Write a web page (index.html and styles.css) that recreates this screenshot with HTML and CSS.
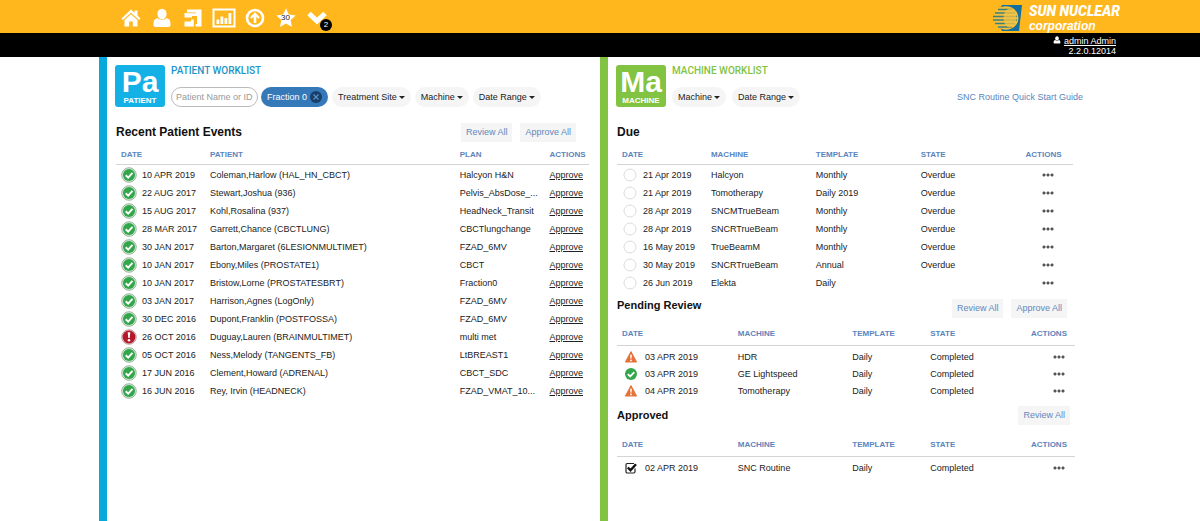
FILE: index.html
```html
<!DOCTYPE html>
<html lang="en">
<head>
<meta charset="utf-8">
<meta name="viewport" content="width=device-width, initial-scale=1">
<title>Worklists</title>
<link rel="stylesheet" href="styles.css">
</head>
<body>
<svg class="sprite" aria-hidden="true">
  <symbol id="pass" viewBox="0 0 16 16"><circle cx="8" cy="8" r="7.3" fill="#d5e6d7" stroke="#86a98a" stroke-width=".8"/><circle cx="8" cy="8" r="6" fill="#32a64a"/><path d="M4.700 8.200l2.500 2.400 4.300-4.700" fill="none" stroke="#fff" stroke-width="2"/></symbol>
  <symbol id="fail" viewBox="0 0 16 16"><circle cx="8" cy="8" r="7.300" fill="#e6d0d2" stroke="#b58a8e" stroke-width=".8"/><circle cx="8" cy="8" r="6.400" fill="#b3192b"/><path d="M6.700 3.200h2.600l-.6 5.800H7.300z" fill="#fff"/><circle cx="8" cy="11.300" r="1.300" fill="#fff"/></symbol>
  <symbol id="empty" viewBox="0 0 16 16"><circle cx="8" cy="8" r="6" fill="#fff" stroke="#dcdcdc"/></symbol>
  <symbol id="warn" viewBox="0 0 16 16"><path d="M8 2.600L13.600 13H2.400z" fill="#e5723a" stroke="#e5723a" stroke-linejoin="round"/><path d="M7.100 5.800h1.800l-.4 4h-1z" fill="#fff"/><circle cx="8" cy="11.400" r=".9" fill="#fff"/></symbol>
  <symbol id="ok" viewBox="0 0 16 16"><circle cx="8" cy="8" r="6" fill="#32a64a"/><path d="M4.800 8.100l2.400 2.300 4.100-4.300" fill="none" stroke="#fff" stroke-width="1.800"/></symbol>
  <symbol id="ticked" viewBox="0 0 16 16"><path d="M12 8.600v3.200a1.200 1.200 0 0 1-1.200 1.200H4.200A1.200 1.200 0 0 1 3 11.800V4.700a1.200 1.200 0 0 1 1.200-1.200h6.800" fill="none" stroke="#222" stroke-width="1.200"/><path d="M4.800 7.500l2.700 2.700 5.500-6" fill="none" stroke="#111" stroke-width="2.400"/></symbol>
  <symbol id="person" viewBox="0 0 20 20"><ellipse cx="10" cy="6" rx="4.600" ry="5.200"/><path d="M5.500 10C3 10.500 1.500 12.500 1.500 15.500V17q0 2 2 2h13q2 0 2-2v-1.500c0-3-1.500-5-4-5.500C13 12.300 7 12.300 5.500 10z"/></symbol>
</svg>

<header>
  <div class="topbar">
    <nav class="wrap nav" aria-label="Main">
      <div class="nav-icons">
        <a href="#" aria-label="Home"><svg viewBox="0 0 20 20"><path d="M10 1.500l3.500 3.300V2.500h3v5l3 2.900-1.400 1.500L10 4.700l-8.100 7.200L.5 10.400z"/><path d="M10 6.300l6.500 5.700v6.500h-4.700v-5H8.200v5H3.500V12z"/></svg></a>
        <a href="#" aria-label="Patients"><svg viewBox="0 0 20 20"><use href="#person"/></svg></a>
        <a href="#" aria-label="Machines"><svg viewBox="0 0 20 20"><path d="M4 1.500h14.500v17h-6V16h1.500V8H9v1.500H1.500V5H4z"/><path d="M1.500 13.500H8V11.500h2.800v7H1.500z"/><path d="M4 4.800h9" stroke="#ffb71d" stroke-width=".8"/></svg></a>
        <a href="#" aria-label="Reports"><svg class="wide" viewBox="0 0 24 20"><path d="M1.500 1.500h21v17h-21z" fill="none" stroke="#fff" stroke-width="2"/><path d="M4.500 11.500h2.800V16H4.500zM8.500 8.500h2.800V16H8.500zM12.500 10h2.800v6h-2.800zM16.500 5h2.800v11h-2.800z"/></svg></a>
        <a href="#" aria-label="Upload"><svg viewBox="0 0 20 20"><circle cx="10" cy="10" r="8" fill="none" stroke="#fff" stroke-width="2.600"/><path d="M10 4.300l4.800 5-1.300 1.400-2.200-2V15H8.700V8.700l-2.200 2-1.300-1.400z"/></svg></a>
        <a href="#" aria-label="Favourites, 30"><svg viewBox="0 0 20 20"><path d="M10 .3l2.800 6.300 6.900.8-5.100 4.700 1.400 6.900-6-3.500-6 3.500 1.400-6.900L.3 7.400l6.900-.8z"/></svg><span class="count">30</span></a>
        <a href="#" aria-label="Tasks, 2"><svg viewBox="0 0 20 20"><path d="M2 5.500l8 7.500 8-7.500" fill="none" stroke="#fff" stroke-width="5"/></svg><span class="badge">2</span></a>
      </div>
      <div class="brand">
        <svg viewBox="0 0 29 26"><path d="M9 0h20l-3 26H9c-4-6-4-20 0-26z" fill="#126f9f"/><ellipse cx="13" cy="13" rx="12.500" ry="11.800" fill="#f4bf3c"/><path d="M5 4.500h14M2 8h20M0 11.500h24M0 15h24M2 18.500h20M5 22h14" stroke="#3e8077" stroke-width="1.300"/><ellipse cx="17" cy="13" rx="6.500" ry="9.500" fill="#f6c444" opacity=".75"/></svg>
        <div><div class="brand-name">SUN NUCLEAR</div><div class="brand-sub">corporation</div></div>
      </div>
    </nav>
  </div>
  <div class="userbar">
    <div class="wrap user">
      <div><svg viewBox="0 0 20 20"><use href="#person"/></svg> <a href="#">admin Admin</a></div>
      <div>2.2.0.12014</div>
    </div>
  </div>
</header>

<main class="wrap panels">
  <section class="panel patient">
    <div class="panel-head">
      <div class="tile"><b>Pa</b><span>PATIENT</span></div>
      <div class="head-body">
        <h1>PATIENT WORKLIST</h1>
        <div class="filters">
          <input type="text" placeholder="Patient Name or ID" aria-label="Patient Name or ID">
          <button class="pill active">Fraction 0 <svg viewBox="0 0 12 12"><circle cx="6" cy="6" r="6" fill="#173f6c"/><path d="M3.500 3.500l5 5M8.500 3.500l-5 5" stroke="#5d91c5" stroke-width="1.200"/></svg></button>
          <button class="pill">Treatment Site<i class="caret"></i></button>
          <button class="pill">Machine<i class="caret"></i></button>
          <button class="pill">Date Range<i class="caret"></i></button>
        </div>
      </div>
    </div>
    <div class="bar"><h2>Recent Patient Events</h2><div class="bulk"><button>Review All</button><button>Approve All</button></div></div>
    <table class="events">
      <colgroup><col class="c-date"><col class="c-name"><col class="c-plan"><col></colgroup>
      <thead><tr><th>DATE</th><th>PATIENT</th><th>PLAN</th><th>ACTIONS</th></tr></thead>
      <tbody>
        <tr><td><svg><use href="#pass"/></svg>10 APR 2019</td><td>Coleman,Harlow (HAL_HN_CBCT)</td><td>Halcyon H&amp;N</td><td><a href="#">Approve</a></td></tr>
        <tr><td><svg><use href="#pass"/></svg>22 AUG 2017</td><td>Stewart,Joshua (936)</td><td>Pelvis_AbsDose_...</td><td><a href="#">Approve</a></td></tr>
        <tr><td><svg><use href="#pass"/></svg>15 AUG 2017</td><td>Kohl,Rosalina (937)</td><td>HeadNeck_Transit</td><td><a href="#">Approve</a></td></tr>
        <tr><td><svg><use href="#pass"/></svg>28 MAR 2017</td><td>Garrett,Chance (CBCTLUNG)</td><td>CBCTlungchange</td><td><a href="#">Approve</a></td></tr>
        <tr><td><svg><use href="#pass"/></svg>30 JAN 2017</td><td>Barton,Margaret (6LESIONMULTIMET)</td><td>FZAD_6MV</td><td><a href="#">Approve</a></td></tr>
        <tr><td><svg><use href="#pass"/></svg>10 JAN 2017</td><td>Ebony,Miles (PROSTATE1)</td><td>CBCT</td><td><a href="#">Approve</a></td></tr>
        <tr><td><svg><use href="#pass"/></svg>10 JAN 2017</td><td>Bristow,Lorne (PROSTATESBRT)</td><td>Fraction0</td><td><a href="#">Approve</a></td></tr>
        <tr><td><svg><use href="#pass"/></svg>03 JAN 2017</td><td>Harrison,Agnes (LogOnly)</td><td>FZAD_6MV</td><td><a href="#">Approve</a></td></tr>
        <tr><td><svg><use href="#pass"/></svg>30 DEC 2016</td><td>Dupont,Franklin (POSTFOSSA)</td><td>FZAD_6MV</td><td><a href="#">Approve</a></td></tr>
        <tr><td><svg><use href="#fail"/></svg>26 OCT 2016</td><td>Duguay,Lauren (BRAINMULTIMET)</td><td>multi met</td><td><a href="#">Approve</a></td></tr>
        <tr><td><svg><use href="#pass"/></svg>05 OCT 2016</td><td>Ness,Melody (TANGENTS_FB)</td><td>LtBREAST1</td><td><a href="#">Approve</a></td></tr>
        <tr><td><svg><use href="#pass"/></svg>17 JUN 2016</td><td>Clement,Howard (ADRENAL)</td><td>CBCT_SDC</td><td><a href="#">Approve</a></td></tr>
        <tr><td><svg><use href="#pass"/></svg>16 JUN 2016</td><td>Rey, Irvin (HEADNECK)</td><td>FZAD_VMAT_10...</td><td><a href="#">Approve</a></td></tr>
      </tbody>
    </table>
  </section>

  <section class="panel machine">
    <div class="panel-head">
      <div class="tile"><b>Ma</b><span>MACHINE</span></div>
      <div class="head-body">
        <h1>MACHINE WORKLIST</h1>
        <div class="filters">
          <button class="pill">Machine<i class="caret"></i></button>
          <button class="pill">Date Range<i class="caret"></i></button>
          <a class="guide" href="#">SNC Routine Quick Start Guide</a>
        </div>
      </div>
    </div>
    <div class="bar"><h2>Due</h2></div>
    <table class="due">
      <colgroup><col class="d-date"><col class="d-mach"><col class="d-temp"><col class="d-state"><col></colgroup>
      <thead><tr><th>DATE</th><th>MACHINE</th><th>TEMPLATE</th><th>STATE</th><th>ACTIONS</th></tr></thead>
      <tbody>
        <tr><td><svg><use href="#empty"/></svg>21 Apr 2019</td><td>Halcyon</td><td>Monthly</td><td>Overdue</td><td><button class="more" aria-label="More actions"></button></td></tr>
        <tr><td><svg><use href="#empty"/></svg>21 Apr 2019</td><td>Tomotherapy</td><td>Daily 2019</td><td>Overdue</td><td><button class="more" aria-label="More actions"></button></td></tr>
        <tr><td><svg><use href="#empty"/></svg>28 Apr 2019</td><td>SNCMTrueBeam</td><td>Monthly</td><td>Overdue</td><td><button class="more" aria-label="More actions"></button></td></tr>
        <tr><td><svg><use href="#empty"/></svg>28 Apr 2019</td><td>SNCRTrueBeam</td><td>Monthly</td><td>Overdue</td><td><button class="more" aria-label="More actions"></button></td></tr>
        <tr><td><svg><use href="#empty"/></svg>16 May 2019</td><td>TrueBeamM</td><td>Monthly</td><td>Overdue</td><td><button class="more" aria-label="More actions"></button></td></tr>
        <tr><td><svg><use href="#empty"/></svg>30 May 2019</td><td>SNCRTrueBeam</td><td>Annual</td><td>Overdue</td><td><button class="more" aria-label="More actions"></button></td></tr>
        <tr><td><svg><use href="#empty"/></svg>26 Jun 2019</td><td>Elekta</td><td>Daily</td><td></td><td><button class="more" aria-label="More actions"></button></td></tr>
      </tbody>
    </table>
    <div class="bar pending"><h2>Pending Review</h2><div class="bulk"><button>Review All</button><button>Approve All</button></div></div>
    <table class="done">
      <colgroup><col class="p-date"><col class="p-mach"><col class="p-temp"><col class="p-state"><col></colgroup>
      <thead><tr><th>DATE</th><th>MACHINE</th><th>TEMPLATE</th><th>STATE</th><th>ACTIONS</th></tr></thead>
      <tbody>
        <tr><td><svg><use href="#warn"/></svg>03 APR 2019</td><td>HDR</td><td>Daily</td><td>Completed</td><td><button class="more" aria-label="More actions"></button></td></tr>
        <tr><td><svg><use href="#ok"/></svg>03 APR 2019</td><td>GE Lightspeed</td><td>Daily</td><td>Completed</td><td><button class="more" aria-label="More actions"></button></td></tr>
        <tr><td><svg><use href="#warn"/></svg>04 APR 2019</td><td>Tomotherapy</td><td>Daily</td><td>Completed</td><td><button class="more" aria-label="More actions"></button></td></tr>
      </tbody>
    </table>
    <div class="bar approved"><h2>Approved</h2><div class="bulk"><button>Review All</button></div></div>
    <table class="done">
      <colgroup><col class="p-date"><col class="p-mach"><col class="p-temp"><col class="p-state"><col></colgroup>
      <thead><tr><th>DATE</th><th>MACHINE</th><th>TEMPLATE</th><th>STATE</th><th>ACTIONS</th></tr></thead>
      <tbody>
        <tr><td><svg><use href="#ticked"/></svg>02 APR 2019</td><td>SNC Routine</td><td>Daily</td><td>Completed</td><td><button class="more" aria-label="More actions"></button></td></tr>
      </tbody>
    </table>
  </section>
</main>
</body>
</html>
```
FILE: styles.css
```css
* { box-sizing: border-box; }
body {
  margin: 0;
  min-height: 100vh;
  display: flex;
  flex-direction: column;
  background: #fff;
  color: #222;
  font: 9px/12px "Liberation Sans", Arial, sans-serif;
}
button, input { font: inherit; }
button { border: 0; cursor: pointer; white-space: nowrap; }
h1, h2 { margin: 0; }
.sprite { position: absolute; width: 0; height: 0; }
.wrap { width: 100%; max-width: 1002px; margin: 0 auto; }

.topbar { background: #ffb71d; }
.nav { display: flex; justify-content: space-between; align-items: center; height: 33px; padding: 2px 0 0 16px; }
.nav-icons { display: flex; align-items: center; }
.nav-icons a { display: flex; justify-content: center; width: 31px; position: relative; }
.nav-icons svg { width: 20px; height: 20px; fill: #fff; }
.nav-icons .wide { width: 24px; }
.count { position: absolute; inset: 0; font-size: 8px; line-height: 20px; text-align: center; color: #222; }
.badge { position: absolute; right: 0; bottom: -3px; width: 12px; height: 12px; border-radius: 50%; background: #000; color: #fff; font-size: 8px; text-align: center; }
.brand { display: flex; align-items: center; gap: 7px; margin-right: -19px; color: #fff; }
.brand svg { width: 29px; height: 26px; }
.brand-name { font: italic 900 14px/16px Roboto, sans-serif; }
.brand-sub { font: italic bold 12px/14px "Liberation Sans", Arial, sans-serif; }

.userbar { background: #000; color: #fff; }
.user { height: 24px; padding: 3px 0; text-align: right; line-height: 10px; }
.user > div { margin-right: -15px; }
.user a { color: #fff; }
.user svg { width: 8px; height: 8px; fill: #fff; }

.panels { flex: 1; display: grid; grid-template-columns: 1fr 1fr; }
.panel { border-left: 8px solid; padding: 8px 11px 16px 9px; }
.patient { border-color: #05a9dc; }
.machine { border-color: #82c341; padding-right: 26px; }
.panel-head { display: flex; gap: 6px; margin-left: -1px; }
.tile { display: flex; flex-direction: column; align-items: center; width: 50px; height: 42px; padding-top: 3px; border-radius: 3px; color: #fff; font-weight: bold; }
.tile b { font-size: 30px; line-height: 28px; }
.tile span { font-size: 8px; line-height: 10px; }
.patient .tile { background: #14b1e7; }
.machine .tile { background: #82c341; }
.head-body { flex: 1; display: flex; flex-direction: column; justify-content: space-between; }
h1 { font: 500 10px/12px Roboto, sans-serif; }
.patient h1 { color: #1c94c8; }
.machine h1 { color: #82c341; }
.filters { display: flex; align-items: center; gap: 3px; }
.machine .filters { gap: 5px; }
.filters input { width: 87px; height: 20px; padding: 0 4px; border: 1px solid #bbb; border-radius: 10px; }
.filters input::placeholder { color: #999; }
.pill { display: flex; align-items: center; gap: 2px; height: 20px; padding: 0 6px; border-radius: 10px; background: #f5f5f5; color: #222; }
.pill + .pill { margin-left: 1px; }
.pill.active { gap: 3px; background: #3579b9; color: #fff; }
.pill svg { width: 12px; height: 12px; }
.caret { border: 3px solid transparent; border-top-color: #222; border-bottom: 0; }
.guide { margin-left: auto; margin-right: -8px; color: #5b85bd; text-decoration: none; }

.bar { display: flex; align-items: center; justify-content: space-between; height: 20px; margin-top: 15px; }
h2 { font-size: 12px; line-height: 16px; color: #111; }
.bulk { display: flex; gap: 8px; margin-right: 13px; }
.bulk button { height: 19px; padding: 0 5px; background: #f5f5f5; color: #6088bd; }
.pending { align-items: flex-start; height: 21px; margin-top: 6px; }
.pending .bulk { align-self: flex-end; margin-right: 8px; }
.approved { margin: 6px 0 3px; }
.approved .bulk { margin-right: 5px; }
.pending h2, .approved h2 { font-size: 11px; }

table { width: 100%; border-collapse: collapse; table-layout: fixed; }
th { height: 22px; padding: 4px 0 0 5px; border-bottom: 1px solid #d4d4d4; color: #5b85bd; font-size: 8px; text-align: left; }
td { height: 18px; padding: 2px 0 0 5px; line-height: 16px; white-space: nowrap; }
td svg { width: 16px; height: 16px; margin-right: 5px; vertical-align: top; }
td a { color: #222; }
.c-date { width: 18.8%; }
.c-name { width: 52.8%; }
.c-plan { width: 19%; }
.due { width: calc(100% - 2px); }
.d-date { width: 19.5%; }
.d-mach, .d-temp, .d-state { width: 23%; }
.done th { height: 28px; padding-top: 6px; }
.done td { height: 17px; padding-top: 0; }
.done td svg { margin: 0 6px 0 1px; }
.done tr:first-child td { height: 19px; padding-top: 3px; }
.p-date { width: 25.3%; }
.p-mach { width: 25%; }
.p-temp { width: 17%; }
.p-state { width: 22%; }
.more { display: block; width: 12px; height: 10px; margin-left: 16px; padding: 0; background: radial-gradient(circle, #555 1px, transparent 2px) 0 50% / 4px 4px repeat-x; }
.done .more { margin-left: 22px; }
```
